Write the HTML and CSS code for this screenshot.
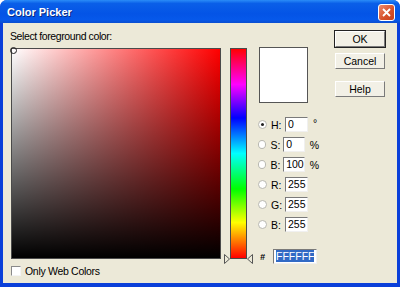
FILE: index.html
```html
<!DOCTYPE html>
<html lang="en">
<head>
    <meta charset="UTF-8">
    <meta name="viewport" content="width=device-width, initial-scale=1.0">
    <title>Color Picker</title>
    <link rel="stylesheet" href="styles.css">
</head>
<body>
    <div class="window">
        <div class="titlebar">
            <span class="title">Color Picker</span>
            <span class="close">
                <svg width="9" height="9" viewBox="0 0 9 9"><path d="M1 1 L8 8 M8 1 L1 8" stroke="#fff" stroke-width="1.8" fill="none"/></svg>
            </span>
        </div>
        <div class="client">
            <div class="left">
                <div class="prompt">Select foreground color:</div>
                <div class="pickers">
                    <div class="field"><span class="marker"></span></div>
                    <div class="hue">
                        <svg class="arrow arrow-left" width="6" height="10" viewBox="0 0 6 10"><path d="M0.5 0.5 L5.5 5 L0.5 9.5 Z" fill="#ece9d8" stroke="#555" stroke-width="1"/></svg>
                        <svg class="arrow arrow-right" width="6" height="10" viewBox="0 0 6 10"><path d="M5.5 0.5 L0.5 5 L5.5 9.5 Z" fill="#ece9d8" stroke="#555" stroke-width="1"/></svg>
                    </div>
                </div>
                <label class="webcolors"><span class="checkbox"></span>Only Web Colors</label>
            </div>

            <div class="middle">
                <div class="swatch"></div>
                <div class="rows">
                    <div class="row"><span class="radio checked"></span><span class="key">H:</span><span class="box">0</span><span class="unit deg">°</span></div>
                    <div class="row"><span class="radio"></span><span class="key">S:</span><span class="box">0</span><span class="unit">%</span></div>
                    <div class="row"><span class="radio"></span><span class="key">B:</span><span class="box">100</span><span class="unit">%</span></div>
                    <div class="row rgb"><span class="radio"></span><span class="key">R:</span><span class="box">255</span></div>
                    <div class="row"><span class="radio"></span><span class="key">G:</span><span class="box">255</span></div>
                    <div class="row"><span class="radio"></span><span class="key">B:</span><span class="box">255</span></div>
                    <div class="row hex"><span class="hash">#</span><span class="box wide"><span class="sel">FFFFFF</span></span></div>
                </div>
            </div>

            <div class="buttons">
                <button class="btn default">OK</button>
                <button class="btn">Cancel</button>
                <button class="btn help">Help</button>
            </div>
        </div>
    </div>
</body>
</html>
```

FILE: styles.css
```css
body {
    margin: 0;
    padding: 0;
    font-family: "Liberation Sans", Arial, sans-serif;
    font-size: 10.5px;
    background-color: #ffffff;
}

.window {
    width: 400px;
    height: 287px;
    box-sizing: border-box;
    background-color: #0a3fd9;
    border-radius: 7px 7px 0 0;
    overflow: hidden;
    display: flex;
    flex-direction: column;
}

.titlebar {
    height: 23px;
    flex: none;
    display: flex;
    align-items: center;
    justify-content: space-between;
    padding: 0 5px 0 7px;
    background: linear-gradient(#2a8cf8 0%, #0a5fe8 15%, #0454e6 60%, #0658ea 85%, #0a4ed0 100%);
}

.title {
    color: #ffffff;
    font-weight: bold;
    font-size: 11px;
    text-shadow: 1px 1px 0 #0a2a80;
}

.close {
    width: 15px;
    height: 15px;
    border: 1px solid #ffffff;
    border-radius: 3px;
    background: linear-gradient(135deg, #ec8a6c, #d6502a 60%, #c8401c);
    display: flex;
    align-items: center;
    justify-content: center;
    margin-top: 1px;
}

.client {
    flex: 1;
    margin: 0 3px 4px 3px;
    background-color: #ece9d8;
    display: flex;
    padding: 7px 0 0 7px;
}

.left {
    width: 237px;
    flex: none;
}

.prompt {
    line-height: 13px;
    margin-bottom: 5px;
    letter-spacing: -0.4px;
    color: #000000;
}

.pickers {
    display: flex;
    margin-left: 1px;
}

.field {
    position: relative;
    width: 208px;
    height: 209px;
    border: 1px solid #4a4a4a;
    background: linear-gradient(to top, #000000, rgba(0, 0, 0, 0)),
                linear-gradient(to right, #ffffff, #ff0000);
}

.marker {
    position: absolute;
    left: -2px;
    top: -2px;
    width: 5px;
    height: 5px;
    border: 1px solid #202020;
    border-radius: 50%;
}

.hue {
    position: relative;
    width: 15px;
    height: 209px;
    margin-left: 9px;
    border: 1px solid #4a4a4a;
    background: linear-gradient(to bottom, #ff0000, #ff00ff 17%, #0000ff 33%, #00ffff 50%, #00ff00 67%, #ffff00 83%, #ff0000);
}

.arrow {
    position: absolute;
    bottom: -6px;
}

.arrow-left {
    left: -7px;
}

.arrow-right {
    right: -7px;
}

.webcolors {
    display: flex;
    align-items: center;
    margin-top: 6px;
    margin-left: 1px;
    letter-spacing: -0.3px;
    color: #000000;
}

.checkbox {
    width: 8px;
    height: 8px;
    margin-right: 4px;
    border: 1px solid;
    border-color: #8a8a8a #f4f4f4 #f4f4f4 #8a8a8a;
    background-color: #ffffff;
}

.middle {
    width: 60px;
    flex: none;
    margin-left: 12px;
    padding-top: 17px;
}

.swatch {
    width: 47px;
    height: 54px;
    border: 1px solid #555555;
    background-color: #ffffff;
}

.rows {
    margin-top: 14px;
}

.row {
    display: flex;
    align-items: center;
    height: 15px;
    margin-bottom: 5px;
}

.row.rgb {
    margin-top: 4px;
}

.radio {
    width: 9px;
    height: 9px;
    box-sizing: border-box;
    border-radius: 50%;
    border: 1px solid #b8b8b0;
    background-color: #ffffff;
    margin-left: -1px;
    margin-right: 4px;
    position: relative;
}

.radio.checked::after {
    content: "";
    position: absolute;
    left: 2px;
    top: 2px;
    width: 3px;
    height: 3px;
    border-radius: 50%;
    background-color: #222222;
}

.key {
    width: 14px;
}

.box {
    width: 19px;
    height: 13px;
    line-height: 13px;
    padding-left: 2px;
    border: 1px solid;
    border-color: #7a7a7a #f0f0f0 #f0f0f0 #7a7a7a;
    background-color: #ffffff;
    color: #000000;
}

.box.wide {
    width: 40px;
    flex: none;
}

.unit {
    margin-left: 5px;
}

.unit.deg {
    align-self: flex-start;
}

.hash {
    width: 13px;
    margin-left: 1px;
    font-style: italic;
    font-weight: bold;
    font-size: 9px;
}

.row.hex {
    margin-top: 17px;
}

.sel {
    background-color: #316ac5;
    color: #ffffff;
}

.buttons {
    display: flex;
    flex-direction: column;
    margin-left: 16px;
    padding-top: 1px;
}

.btn {
    width: 50px;
    height: 16px;
    padding: 0;
    font-family: "Liberation Sans", Arial, sans-serif;
    font-size: 10.5px;
    color: #000000;
    background-color: #f2f0e6;
    border: 1px solid;
    border-color: #ffffff #7a7a7a #7a7a7a #ffffff;
    margin-bottom: 6px;
}

.btn.default {
    outline: 1px solid #222222;
}

.btn.help {
    margin-top: 6px;
}
```
